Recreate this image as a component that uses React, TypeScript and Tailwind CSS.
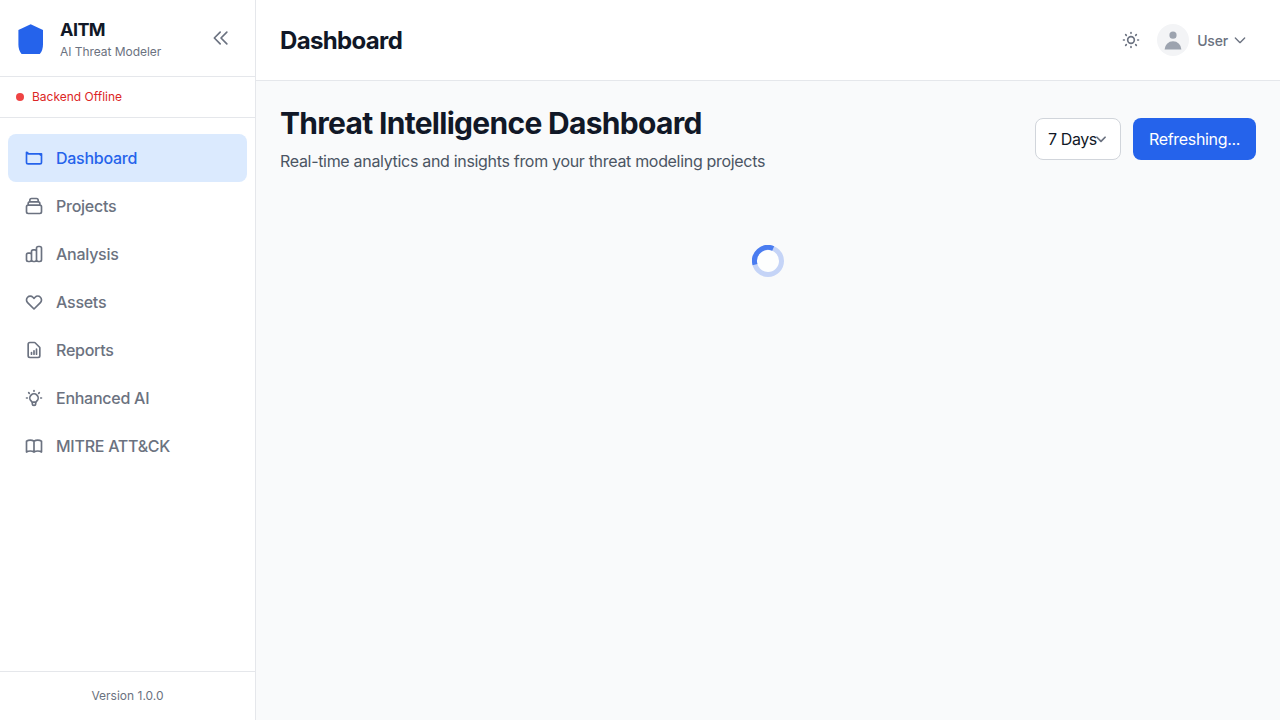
import React from "react";

const icons = {
  dashboard:
    "M3 5.200v11.800a2 2 0 002 2h14a2 2 0 002-2V9a2 2 0 00-2-2H5a2 2 0 00-2-1.800z M18.500 7h2.500v2.200l-2-1.700",
  projects:
    "M19 11H5m14 0a2 2 0 012 2v6a2 2 0 01-2 2H5a2 2 0 01-2-2v-6a2 2 0 012-2m14 0V9a2 2 0 00-2-2M5 11V9a2 2 0 012-2m0 0V5a2 2 0 012-2h6a2 2 0 012 2v2M7 7h10",
  analysis:
    "M9 19v-6a2 2 0 00-2-2H5a2 2 0 00-2 2v6a2 2 0 002 2h2a2 2 0 002-2zm0 0V9a2 2 0 012-2h2a2 2 0 012 2v10m-6 0a2 2 0 002 2h2a2 2 0 002-2m0 0V5a2 2 0 012-2h2a2 2 0 012 2v14a2 2 0 01-2 2h-2a2 2 0 01-2-2z",
  assets:
    "M4.318 6.318a4.5 4.5 0 000 6.364L12 20.364l7.682-7.682a4.5 4.5 0 00-6.364-6.364L12 7.636l-1.318-1.318a4.5 4.5 0 00-6.364 0z",
  reports:
    "M9 17v-2m3 2v-4m3 4v-6m2 10H7a2 2 0 01-2-2V5a2 2 0 012-2h5.586a1 1 0 01.707.293l5.414 5.414a1 1 0 01.293.707V19a2 2 0 01-2 2z",
  bulb: "M9.663 17h4.673M12 3v1m6.364 1.636l-.707.707M21 12h-1M4 12H3m3.343-5.657l-.707-.707m2.828 9.9a5 5 0 117.072 0l-.548.547A3.374 3.374 0 0014 18.469V19a2 2 0 11-4 0v-.531c0-.895-.356-1.754-.988-2.386l-.548-.547z",
  book: "M12 6.253v13m0-13C10.832 5.477 9.246 5 7.5 5S4.168 5.477 3 6.253v13C4.168 18.477 5.754 18 7.5 18s3.332.477 4.5 1.253m0-13C13.168 5.477 14.754 5 16.5 5c1.747 0 3.332.477 4.5 1.253v13C19.832 18.477 18.247 18 16.5 18c-1.746 0-3.332.477-4.5 1.253",
  sun: "M12 3v1m0 16v1m9-9h-1M4 12H3m15.364 6.364l-.707-.707M6.343 6.343l-.707-.707m12.728 0l-.707.707M6.343 17.657l-.707.707M16 12a4 4 0 11-8 0 4 4 0 018 0z",
  collapse: "M11 19l-7-7 7-7m8 14l-7-7 7-7",
  chevron: "M19 9l-7 7-7-7",
};

function Icon({
  d,
  className = "size-5",
  strokeWidth = 2,
}: {
  d: string;
  className?: string;
  strokeWidth?: number;
}) {
  return (
    <svg
      className={`shrink-0 ${className}`}
      viewBox="0 0 24 24"
      fill="none"
      stroke="currentColor"
      strokeWidth={strokeWidth}
      strokeLinecap="round"
      strokeLinejoin="round"
    >
      <path d={d} />
    </svg>
  );
}

const navItems = [
  { label: "Dashboard", icon: icons.dashboard, active: true },
  { label: "Projects", icon: icons.projects },
  { label: "Analysis", icon: icons.analysis },
  { label: "Assets", icon: icons.assets },
  { label: "Reports", icon: icons.reports },
  { label: "Enhanced AI", icon: icons.bulb },
  { label: "MITRE ATT&CK", icon: icons.book },
];

function Sidebar() {
  return (
    <aside className="flex w-64 shrink-0 flex-col border-r border-[#e5e7eb] bg-white">
      <div className="flex h-[77px] items-center justify-between border-b border-[#e5e7eb] px-4">
        <div className="flex items-center gap-3">
          <svg className="size-8 text-[#2563eb]" viewBox="0 0 32 32" fill="currentColor">
            <path d="M14.700 2.200 27 8v14.500c0 3.500-1 7-3.200 9.500H5.600C3.400 29.500 2.400 26 2.400 22.500V8z" />
          </svg>
          <div>
            <h1 className="text-lg font-bold leading-7 tracking-[-0.55px] text-[#111827]">AITM</h1>
            <p className="text-xs tracking-[-0.04px] text-[#6b7280]">AI Threat Modeler</p>
          </div>
        </div>
        <button className="p-2 text-[#6b7280]">
          <Icon d={icons.collapse} />
        </button>
      </div>
      <div className="flex h-[41px] items-center gap-2 border-b border-[#e5e7eb] px-4">
        <span className="size-2 rounded-full bg-[#ef4444]" />
        <span className="text-xs text-[#dc2626]">Backend Offline</span>
      </div>
      <nav className="flex-1 px-2 py-4">
        {navItems.map((item) => (
          <a
            key={item.label}
            className={`flex h-12 items-center gap-3 rounded-lg px-4 font-medium tracking-[-0.26px] ${
              item.active ? "bg-[#dbeafe] text-[#2563eb]" : "text-[#6b7280]"
            }`}
          >
            <Icon d={item.icon} />
            <span>{item.label}</span>
          </a>
        ))}
      </nav>
      <div className="border-t border-[#e5e7eb] p-4 text-center text-xs text-[#6b7280]">
        Version 1.0.0
      </div>
    </aside>
  );
}

function Header() {
  return (
    <header className="flex h-[81px] items-center justify-between border-b border-[#e5e7eb] bg-white px-6">
      <h1 className="pt-0.5 text-2xl font-bold tracking-[-0.65px] text-[#111827]">Dashboard</h1>
      <div className="flex items-center gap-2 text-[#6b7280]">
        <button className="p-2">
          <Icon d={icons.sun} />
        </button>
        <button className="flex items-center pr-2">
          <span className="flex size-8 items-center justify-center rounded-full bg-[#f3f4f6]">
            <svg className="size-6 text-[#9ca3af]" viewBox="0 0 20 20" fill="currentColor">
              <path d="M10 9a3 3 0 100-6 3 3 0 000 6zm-7 9a7 7 0 1114 0H3z" />
            </svg>
          </span>
          <span className="ml-2 mr-1 pt-px text-sm font-medium tracking-[-0.18px]">User</span>
          <Icon d={icons.chevron} className="size-4" />
        </button>
      </div>
    </header>
  );
}

export default function App() {
  return (
    <div className="flex h-screen overflow-hidden bg-[#f9fafb] font-['Inter',sans-serif]">
      <Sidebar />
      <div className="flex min-w-0 flex-1 flex-col">
        <Header />
        <main className="flex-1 p-6">
          <div className="flex items-center justify-between">
            <div>
              <h1 className="text-3xl font-bold tracking-[-0.7px] text-[#111827]">
                Threat Intelligence Dashboard
              </h1>
              <p className="mt-2 tracking-[-0.315px] text-[#4b5563]">
                Real-time analytics and insights from your threat modeling projects
              </p>
            </div>
            <div className="flex items-center gap-3">
              <div className="flex h-[42px] w-[86px] items-center rounded-lg border border-[#d1d5db] bg-white pl-3 text-[#111827]">
                <span className="whitespace-nowrap tracking-[-0.4px]">7 Days</span>
                <Icon
                  d={icons.chevron}
                  strokeWidth={3}
                  className="-ml-[3px] size-3.5 text-[#6b7280]"
                />
              </div>
              <button className="h-[42px] w-[123px] whitespace-nowrap rounded-lg bg-[#2563eb] px-4 text-left tracking-[-0.32px] text-white">
                Refreshing...
              </button>
            </div>
          </div>
          <div className="mt-[72px] flex justify-center">
            <svg className="size-8" viewBox="0 0 32 32" fill="none" strokeWidth={5}>
              <circle cx="16" cy="16" r="13.500" fill="#fdfefe" stroke="#c5d4f7" />
              <path d="M3 19.600A13.500 13.500 0 0 1 21.200 3.500" stroke="#4a7cf0" />
            </svg>
          </div>
        </main>
      </div>
    </div>
  );
}
